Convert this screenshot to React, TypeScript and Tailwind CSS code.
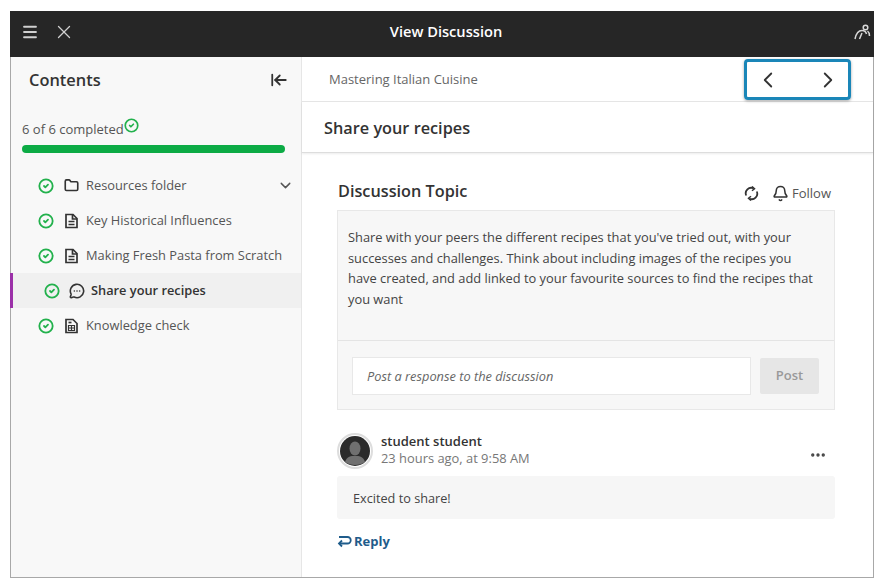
import React from "react";
import { Menu, X, ChevronDown, ChevronLeft, ChevronRight, ArrowLeftToLine, CircleCheck, Folder, MessageCircleMore, Bell, Ellipsis } from "lucide-react";

function Check() {
  return <CircleCheck size={16} strokeWidth={2.7} className="text-[#22b14c] shrink-0" />;
}

function DocIcon() {
  return (
    <svg width="15" height="16" viewBox="0 0 15 16" fill="none" stroke="#333" strokeWidth="1.700">
      <path d="M2 1.500 H9 L13 5.500 V14.500 H2 Z" />
      <path d="M8.500 1.500 V6 H13" />
      <path d="M4.500 8.500 H10.500 M4.500 11.500 H10.500" />
    </svg>
  );
}

function QuizIcon() {
  return (
    <svg width="15" height="16" viewBox="0 0 15 16" fill="none" stroke="#333" strokeWidth="1.700">
      <path d="M2 1.500 H9 L13 5.500 V14.500 H2 Z" />
      <path d="M4.500 7.500 H10.500 V12.500 H4.500 Z M7.500 7.500 V12.500 M4.500 10 H10.500" strokeWidth="1.200" />
      <path d="M4.500 4.500 H7.500" />
    </svg>
  );
}

function Row({ icon, label, active, chevron }: { icon: React.ReactNode; label: string; active?: boolean; chevron?: boolean }) {
  return (
    <div className={active ? "h-[35px] -ml-px flex items-center gap-[9px] pl-[31px] pr-2 bg-[#f0f0f0] border-l-[3px] border-[#9b30a8]" : "h-[35px] flex items-center gap-[9px] pl-[27px] pr-2"}>
      <Check />
      <span className="w-[16px] flex justify-center text-[#333]">{icon}</span>
      <span className={active ? "text-[12.800px] font-semibold text-[#333] -ml-[3px]" : "text-[12.850px] text-[#555] -ml-[2px]"}>{label}</span>
      {chevron && <ChevronDown size={17} strokeWidth={2} className="ml-auto text-[#555] mr-[-1px]" />}
    </div>
  );
}

export default function App() {
  return (
    <div className="w-[878px] h-[584px] bg-white pt-[11px] pl-[10px] overflow-hidden" style={{ fontFamily: '"Open Sans", sans-serif' }}>
      <div className="w-[864px] h-[567px] border-x border-b border-[#a8a8a8] flex flex-col bg-white">
        <header className="h-[46px] bg-[#262626] flex items-center text-[#d0d0d0] shrink-0 -mx-px pb-[4px]">
          <Menu size={18} strokeWidth={2.4} className="ml-[11px]" />
          <X size={22} strokeWidth={1.4} className="ml-[14px]" />
          <div className="flex-1 text-center text-[14.650px] font-semibold text-white pr-[36px]">View Discussion</div>
          <svg width="18" height="18" viewBox="0 0 18 18" fill="none" stroke="#d8d8d8" strokeWidth="1.500" className="mr-[3px]">
            <circle cx="12.500" cy="4.500" r="2.300" />
            <path d="M2 16 C3 11 5.500 7.500 9 7.500 C11.500 7.500 13 9 13.500 11" />
            <path d="M9 10 L6.500 16 M14.500 8 C16 9 16.500 11 16.500 13" />
          </svg>
        </header>
        <div className="flex flex-1 min-h-0">
          <aside className="w-[291px] shrink-0 bg-[#f8f8f8] border-r border-[#e6e6e6]">
            <div className="h-[46px] flex items-center justify-between pl-[18px] pr-[13px]">
              <span className="text-[16.400px] font-semibold text-[#333]">Contents</span>
              <ArrowLeftToLine size={18} strokeWidth={2.4} className="text-[#333]" />
            </div>
            <div className="pl-[11px] pr-[16px] pt-[17px]">
              <div className="flex items-start h-[20px] text-[13px] text-[#555]">
                6 of 6 completed
                <CircleCheck size={15} strokeWidth={2.7} className="text-[#22b14c] -mt-[2px]" />
              </div>
              <div className="h-[8px] mt-[5px] rounded-full bg-[#0cab45]" />
            </div>
            <div className="mt-[15px]">
              <Row icon={<Folder size={15} strokeWidth={2.6} />} label="Resources folder" chevron />
              <Row icon={<DocIcon />} label="Key Historical Influences" />
              <Row icon={<DocIcon />} label="Making Fresh Pasta from Scratch" />
              <Row icon={<MessageCircleMore size={16} strokeWidth={2.4} />} label="Share your recipes" active />
              <Row icon={<QuizIcon />} label="Knowledge check" />
            </div>
          </aside>
          <main className="flex-1 min-w-0 flex flex-col">
            <div className="h-[45px] border-b border-[#e6e6e6] flex items-center shrink-0 pl-[27px] pr-[22px]">
              <span className="text-[13px] text-[#666] mt-[1px]">Mastering Italian Cuisine</span>
              <div className="ml-auto w-[107px] h-[41px] mt-[1px] rounded-[4px] border-[3px] border-[#1a86b8] shadow-[0_1px_3px_rgba(0,0,0,0.35)] flex items-center justify-between pl-[8px] pr-[7px] text-[#333]">
                <ChevronLeft size={26} strokeWidth={1.700} />
                <ChevronRight size={26} strokeWidth={1.700} />
              </div>
            </div>
            <div className="h-[51px] flex items-center pl-[22px] pt-[3px] shrink-0 border-b border-[#ddd] shadow-[0_1px_2px_rgba(0,0,0,0.08)]">
              <span className="text-[16.300px] font-semibold text-[#333]">Share your recipes</span>
            </div>
            <div className="pl-[35px] pr-[38px] flex-1">
              <div className="h-[57px] flex items-end pb-[8px]">
                <span className="ml-px text-[16.250px] font-semibold text-[#333] leading-[22px]">Discussion Topic</span>
                <div className="ml-auto flex items-center text-[#444] pr-[4px] -mb-[1px]">
                  <svg width="15" height="15" viewBox="0 0 15 15" fill="none" stroke="#333" strokeWidth="1.800">
                    <path d="M2.200 9.500 A5.500 5.500 0 0 1 9.500 2.300" />
                    <path d="M12.800 5.500 A5.500 5.500 0 0 1 5.500 12.700" />
                    <path d="M8 0.500 L10.500 2.700 L8 4.800" strokeWidth="1.500" />
                    <path d="M7 10.200 L4.500 12.300 L7 14.500" strokeWidth="1.500" />
                  </svg>
                  <Bell size={17} strokeWidth={2.2} className="ml-[13px] text-[#333]" />
                  <span className="ml-[3px] text-[13px] text-[#555]">Follow</span>
                </div>
              </div>
              <div className="border border-[#e8e8e8] bg-[#f7f7f7] h-[200px] flex flex-col">
                <div className="h-[130px] border-b border-[#e4e4e4] pl-[10px] pr-[16px] pt-[16px] text-[12.850px] leading-[20.700px] text-[#444]">
                  Share with your peers the different recipes that you've tried out, with your successes and challenges. Think about including images of the recipes you have created, and add linked to your favourite sources to find the recipes that you want
                </div>
                <div className="flex items-center pl-[14px] pt-[16px]">
                  <div className="w-[399px] h-[38px] bg-white border border-[#e8e8e8] flex items-center pl-[14px] pt-[2px] text-[12.800px] italic text-[#666]">Post a response to the discussion</div>
                  <div className="ml-[9px] w-[59px] h-[36px] bg-[#e6e6e6] rounded-[2px] flex items-center justify-center text-[13px] font-semibold text-[#999]">Post</div>
                </div>
              </div>
              <div className="flex items-center mt-[22px] h-[38px]">
                <div className="w-[36px] h-[36px] rounded-full border-2 border-[#ddd] bg-white flex items-center justify-center shrink-0">
                  <svg width="30" height="30" viewBox="0 0 30 30">
                    <circle cx="15" cy="15" r="15" fill="#2b2b2b" />
                    <ellipse cx="15" cy="12.500" rx="5.500" ry="7" fill="#707070" />
                    <path d="M5 26 C7 20 11 20 15 20 C19 20 23 20 25 26 C20 30 10 30 5 26 Z" fill="#707070" />
                  </svg>
                </div>
                <div className="ml-[8px] flex-1 -mt-[2px]">
                  <div className="text-[13px] font-semibold text-[#333] leading-[17px]">student student</div>
                  <div className="text-[12.900px] text-[#777] leading-[17px]">23 hours ago, at 9:58 AM</div>
                </div>
                <Ellipsis size={18} strokeWidth={2.5} className="text-[#444] mr-[8px] mt-[7px]" />
              </div>
              <div className="mt-[6px] h-[43px] bg-[#f6f6f6] rounded-[3px] flex items-center pl-[16px] pt-[3px] text-[12.700px] text-[#444]">Excited to share!</div>
              <div className="mt-[13px] flex items-center text-[#1f5c8b] text-[13px] font-bold">
                <svg width="15" height="13" viewBox="0 0 15 13" fill="none" stroke="currentColor" strokeWidth="1.800" className="mr-[2px]">
                  <path d="M2 2 H10.500 A3 3 0 0 1 10.500 8.500 H2" />
                  <path d="M5 5.500 L2 8.500 L5 11.500" />
                </svg>
                Reply
              </div>
            </div>
          </main>
        </div>
      </div>
    </div>
  );
}
